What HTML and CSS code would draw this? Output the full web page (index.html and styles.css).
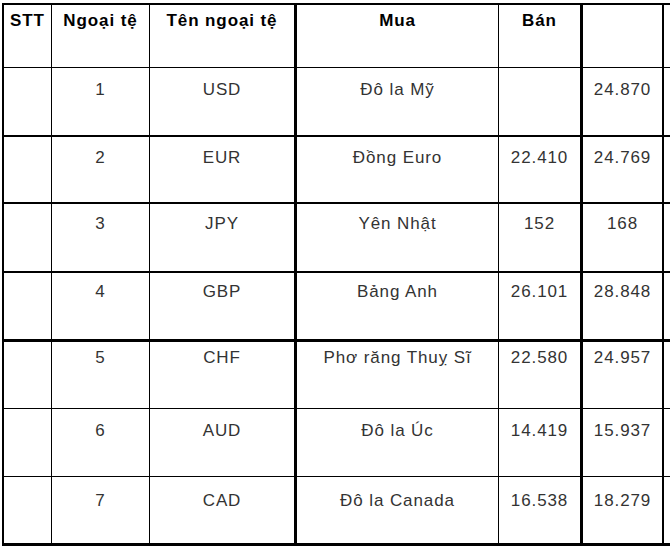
FILE: index.html
```html
<!DOCTYPE html>
<html lang="vi">
<head>
<meta charset="utf-8">
<title>Tỷ giá ngoại tệ</title>
<link rel="stylesheet" href="styles.css">
</head>
<body>
<table class="rates">
  <colgroup>
    <col class="c-stt">
    <col class="c-code">
    <col class="c-name">
    <col class="c-buy">
    <col class="c-sell">
    <col class="c-extra">
    <col class="c-tail">
  </colgroup>
  <tr class="head">
    <th class="b-thin">STT</th>
    <th class="b-thin">Ngoại tệ</th>
    <th class="b-thick">Tên ngoại tệ</th>
    <th class="b-thin">Mua</th>
    <th class="b-thick">Bán</th>
    <th class="b-mid"></th>
    <th></th>
  </tr>
  <tr class="r1 bot-mid">
    <td class="b-thin"></td><td class="b-thin">1</td><td class="b-thick">USD</td><td class="b-thin">Đô la Mỹ</td><td class="b-thick"></td><td class="b-mid">24.870</td><td></td>
  </tr>
  <tr class="r2 bot-mid">
    <td class="b-thin"></td><td class="b-thin">2</td><td class="b-thick">EUR</td><td class="b-thin">Đồng Euro</td><td class="b-thick">22.410</td><td class="b-mid">24.769</td><td></td>
  </tr>
  <tr class="r3 bot-mid">
    <td class="b-thin"></td><td class="b-thin">3</td><td class="b-thick">JPY</td><td class="b-thin">Yên Nhật</td><td class="b-thick">152</td><td class="b-mid">168</td><td></td>
  </tr>
  <tr class="r4 bot-thick">
    <td class="b-thin"></td><td class="b-thin">4</td><td class="b-thick">GBP</td><td class="b-thin">Bảng Anh</td><td class="b-thick">26.101</td><td class="b-mid">28.848</td><td></td>
  </tr>
  <tr class="r5">
    <td class="b-thin"></td><td class="b-thin">5</td><td class="b-thick">CHF</td><td class="b-thin">Phơ răng Thuỵ Sĩ</td><td class="b-thick">22.580</td><td class="b-mid">24.957</td><td></td>
  </tr>
  <tr class="r6">
    <td class="b-thin"></td><td class="b-thin">6</td><td class="b-thick">AUD</td><td class="b-thin">Đô la Úc</td><td class="b-thick">14.419</td><td class="b-mid">15.937</td><td></td>
  </tr>
  <tr class="r7 bot-thick">
    <td class="b-thin"></td><td class="b-thin">7</td><td class="b-thick">CAD</td><td class="b-thin">Đô la Canada</td><td class="b-thick">16.538</td><td class="b-mid">18.279</td><td></td>
  </tr>
</table>
</body>
</html>
```

FILE: styles.css
```css
html, body {
  margin: 0;
  padding: 0;
  background: #fff;
  overflow: hidden;
}

body {
  padding: 3px 0 0 2px;
  font-family: "Liberation Sans", Arial, sans-serif;
  font-size: 17px;
  letter-spacing: 0.9px;
  color: #333;
}

.rates {
  table-layout: fixed;
  border-collapse: separate;
  border-spacing: 0;
  width: 688px;
  border-left: 2px solid #000;
  border-top: 2px solid #000;
}

.c-stt { width: 48px; }
.c-code { width: 98px; }
.c-name { width: 147px; }
.c-buy { width: 202px; }
.c-sell { width: 84px; }
.c-extra { width: 81px; }
.c-tail { width: 28px; }

.rates th,
.rates td {
  box-sizing: border-box;
  padding: 11px 0 0 0;
  text-align: center;
  vertical-align: top;
  line-height: 18px;
  border-bottom: 1px solid #000;
  white-space: nowrap;
  overflow: visible;
}

.rates th {
  padding-top: 7px;
  font-weight: bold;
  color: #000;
}

.b-thin { border-right: 1px solid #000; }
.b-mid { border-right: 2px solid #000; }
.b-thick { border-right: 3px solid #000; }

.bot-mid td { border-bottom-width: 2px; }
.bot-thick td { border-bottom-width: 3px; }

.head { height: 63px; }
.r1 { height: 69px; }
.r2 { height: 67px; }
.r3 { height: 69px; }
.r4 { height: 69px; }
.r5 { height: 67px; }
.r6 { height: 68px; }
.r7 { height: 69px; }

.r1 td { padding-top: 13px; }
.r2 td { padding-top: 12px; }
.r4 td { padding-top: 10px; }
.r5 td { padding-top: 7px; }
.r6 td { padding-top: 13px; }
.r7 td { padding-top: 15px; }
```
